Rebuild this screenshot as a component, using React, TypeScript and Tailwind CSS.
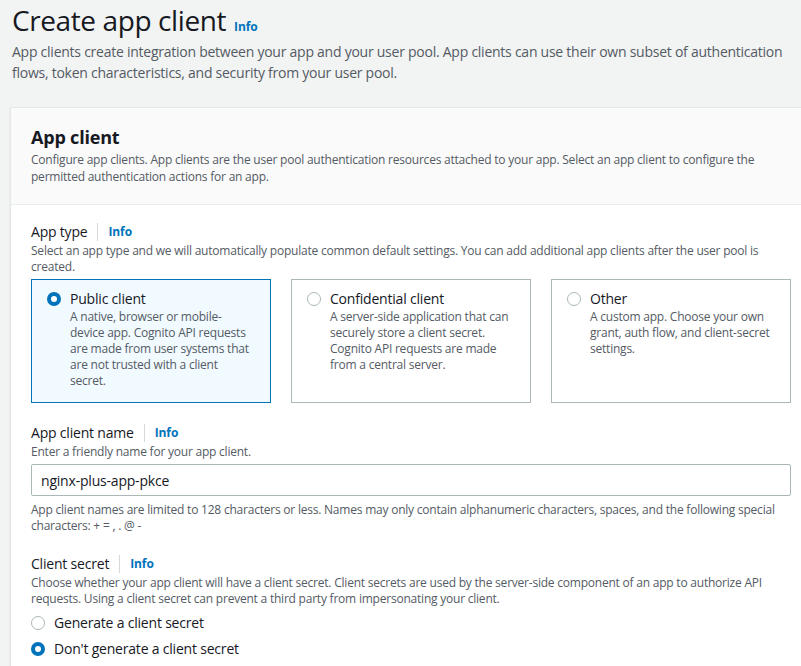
import React from 'react';

const Info = ({ sep = true }: { sep?: boolean }) => (
  <span className="flex items-center">
    {sep && <span className="mx-[10px] h-[18px] w-px bg-[#d5dbdb]" />}
    <span className="text-[12px] font-bold tracking-[-0.1px] text-[#0073bb]">Info</span>
  </span>
);

const Radio = ({ checked }: { checked: boolean }) =>
  checked ? (
    <span className="flex h-[14px] w-[14px] shrink-0 rounded-full border-[4px] border-[#0073bb] bg-white" />
  ) : (
    <span className="flex h-[14px] w-[14px] shrink-0 rounded-full border-[1.5px] border-[#aab7b8] bg-white" />
  );

const TILES = [
  {
    title: 'Public client',
    desc: 'A native, browser or mobile-device app. Cognito API requests are made from user systems that are not trusted with a client secret.',
    checked: true,
  },
  {
    title: 'Confidential client',
    desc: 'A server-side application that can securely store a client secret. Cognito API requests are made from a central server.',
    checked: false,
  },
  {
    title: 'Other',
    desc: 'A custom app. Choose your own grant, auth flow, and client-secret settings.',
    checked: false,
  },
];

export default function App() {
  return (
    <div className="min-h-screen overflow-hidden bg-[#f2f3f3] font-['Open_Sans',sans-serif] text-[#16191f]">
      {/* Page header */}
      <div className="pl-3 pr-2">
        <div className="flex items-baseline gap-[8px] pt-[1px]">
          <h1 className="text-[28px] leading-[38px] tracking-[-0.4px] text-[#16191f]">Create app client</h1>
          <span className="text-[12px] font-bold tracking-[-0.1px] text-[#0073bb]">Info</span>
        </div>
        <p className="mt-[2px] text-[14px] leading-[21px] tracking-[-0.25px] text-[#545b64]">
          App clients create integration between your app and your user pool. App clients can use their own subset of authentication
          flows, token characteristics, and security from your user pool.
        </p>
      </div>

      {/* Card */}
      <div className="ml-[10px] mt-[24px] w-[812px] border-l border-t border-[#e4e7e8] bg-white shadow-[0_1px_1px_rgba(0,28,36,0.2)]">
        <div className="border-b border-[#eaeded] bg-[#fafafa] px-[20px] pb-[19px] pt-[18px]">
          <h2 className="text-[18px] font-bold leading-[22px] tracking-[-0.2px]">App client</h2>
          <p className="mt-[3px] text-[12px] leading-[17px] tracking-[-0.22px] text-[#545b64]">
            Configure app clients. App clients are the user pool authentication resources attached to your app. Select an app client to configure the
            permitted authentication actions for an app.
          </p>
        </div>

        <div className="px-[20px] pb-[20px] pt-[17px]">
          {/* App type */}
          <div className="flex items-center text-[14px] leading-[20px] tracking-[-0.2px]">
            <span>App type</span>
            <Info />
          </div>
          <p className="mt-[1px] text-[12px] leading-[16px] tracking-[-0.22px] text-[#545b64]">
            Select an app type and we will automatically populate common default settings. You can add additional app clients after the user pool is
            created.
          </p>
          <div className="mt-[4px] flex gap-[20px]">
            {TILES.map((t) => (
              <div
                key={t.title}
                className={
                  t.checked
                    ? 'h-[124px] w-[240px] shrink-0 border border-[#0073bb] bg-[#f1faff] px-[15px] pt-[9px]'
                    : 'h-[124px] w-[240px] shrink-0 border border-[#aab7b8] bg-white px-[15px] pt-[9px]'
                }
              >
                <div className="flex items-center gap-[9px]">
                  <Radio checked={t.checked} />
                  <span className="text-[14px] leading-[19px] tracking-[-0.2px]">{t.title}</span>
                </div>
                <p className="ml-[23px] mt-[1px] text-[12px] leading-[16px] tracking-[-0.22px] text-[#545b64]">{t.desc}</p>
              </div>
            ))}
          </div>

          {/* App client name */}
          <div className="mt-[20px] flex items-center text-[14px] leading-[20px] tracking-[-0.2px]">
            <span>App client name</span>
            <Info />
          </div>
          <p className="mt-[1px] text-[12px] leading-[16px] tracking-[-0.22px] text-[#545b64]">Enter a friendly name for your app client.</p>
          <div className="mt-[4px] flex h-[32px] w-[760px] items-center rounded-[2px] border border-[#aab7b8] bg-white px-[9px] text-[14px] tracking-[-0.2px]">
            nginx-plus-app-pkce
          </div>
          <p className="mt-[6px] text-[12px] leading-[16px] tracking-[-0.22px] text-[#545b64]">
            App client names are limited to 128 characters or less. Names may only contain alphanumeric characters, spaces, and the following special
            characters: + = , . @ -
          </p>

          {/* Client secret */}
          <div className="mt-[20px] flex items-center text-[14px] leading-[20px] tracking-[-0.2px]">
            <span>Client secret</span>
            <Info />
          </div>
          <p className="mt-[1px] text-[12px] leading-[16px] tracking-[-0.22px] text-[#545b64]">
            Choose whether your app client will have a client secret. Client secrets are used by the server-side component of an app to authorize API
            requests. Using a client secret can prevent a third party from impersonating your client.
          </p>
          <div className="mt-[6px] flex flex-col gap-[6px]">
            <div className="flex items-center gap-[9px]">
              <Radio checked={false} />
              <span className="text-[14px] leading-[20px] tracking-[-0.2px]">Generate a client secret</span>
            </div>
            <div className="flex items-center gap-[9px]">
              <Radio checked={true} />
              <span className="text-[14px] leading-[20px] tracking-[-0.2px]">Don't generate a client secret</span>
            </div>
          </div>
        </div>
      </div>
    </div>
  );
}
